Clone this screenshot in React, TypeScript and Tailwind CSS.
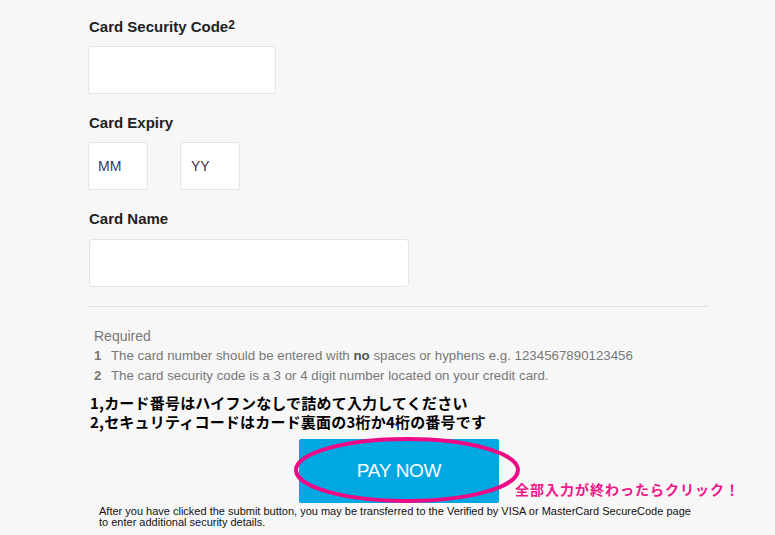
import React from "react";

export default function App() {
  const sans = { fontFamily: '"Liberation Sans", Arial, sans-serif' };
  const jp = { fontFamily: '"Noto Sans CJK JP", "Noto Sans", sans-serif' };
  return (
    <div className="w-[775px] h-[535px] overflow-hidden bg-[#f7f7f7] text-[#222]" style={sans}>
      <div className="pl-[88px] pt-[17px] flex flex-col">
        <div className="text-[15px] font-bold leading-[20px] text-[#222] pl-px">
          Card Security Code<sup className="text-[12px] relative -top-[3px]">2</sup>
        </div>
        <div className="mt-[9px] w-[188px] h-[48px] bg-white border border-[#e4e4e4] rounded-[3px]" />

        <div className="mt-[19px] text-[15px] font-bold leading-[20px] pl-px">Card Expiry</div>
        <div className="mt-[9px] flex gap-[32px]">
          <div className="w-[60px] h-[48px] bg-white border border-[#e4e4e4] rounded-[3px] flex items-center pl-[9px] text-[14px] text-[#23406e]">MM</div>
          <div className="w-[60px] h-[48px] bg-white border border-[#e4e4e4] rounded-[3px] flex items-center pl-[10px] text-[14px] text-[#3a2a4e]">YY</div>
        </div>

        <div className="mt-[19px] text-[15px] font-bold leading-[20px] pl-px">Card Name</div>
        <div className="mt-[10px] ml-px w-[320px] h-[48px] bg-white border border-[#e4e4e4] rounded-[3px]" />

        <div className="mt-[19px] w-[621px] h-px bg-[#e2e2e2]" />

        <div className="mt-[19px] pl-[6px] text-[13.3px] leading-[20px] text-[#777]">
          <div className="text-[14px]">Required</div>
          <div className="flex">
            <span className="font-bold w-[17px]">1</span>
            <span>The card number should be entered with <b className="text-[#555]">no</b> spaces or hyphens e.g. 1234567890123456</span>
          </div>
          <div className="flex">
            <span className="font-bold w-[17px]">2</span>
            <span>The card security code is a 3 or 4 digit number located on your credit card.</span>
          </div>
        </div>

        <div className="mt-[7px] pl-[2px] text-[15px] font-bold leading-[19px] text-black tracking-[0.2px]" style={jp}>
          <div>1,カード番号はハイフンなしで詰めて入力してください</div>
          <div>2,セキュリティコードはカード裏面の3桁か4桁の番号です</div>
        </div>

        <div className="mt-[8px] ml-[211px] relative w-[200px] h-[64px]">
          <div className="w-[200px] h-[64px] bg-[#00a8e2] rounded-[2px] flex items-center justify-center text-white text-[19px] tracking-[-0.3px]">
            PAY NOW
          </div>
          <svg className="absolute -left-[6px] -top-[2px] overflow-visible" width="230" height="68">
            <ellipse cx="114" cy="33" rx="111" ry="31" fill="none" stroke="#ec0a86" strokeWidth="4" />
          </svg>
          <div className="absolute left-[216px] top-[40px] whitespace-nowrap text-[14px] font-bold tracking-[1px] text-[#f0168a]" style={jp}>
            全部入力が終わったらクリック！
          </div>
        </div>

        <div className="mt-[3px] pl-[11px] text-[11px] leading-[11px] text-[#111]">
          <div>After you have clicked the submit button, you may be transferred to the Verified by VISA or MasterCard SecureCode page</div>
          <div>to enter additional security details.</div>
        </div>
      </div>
    </div>
  );
}
